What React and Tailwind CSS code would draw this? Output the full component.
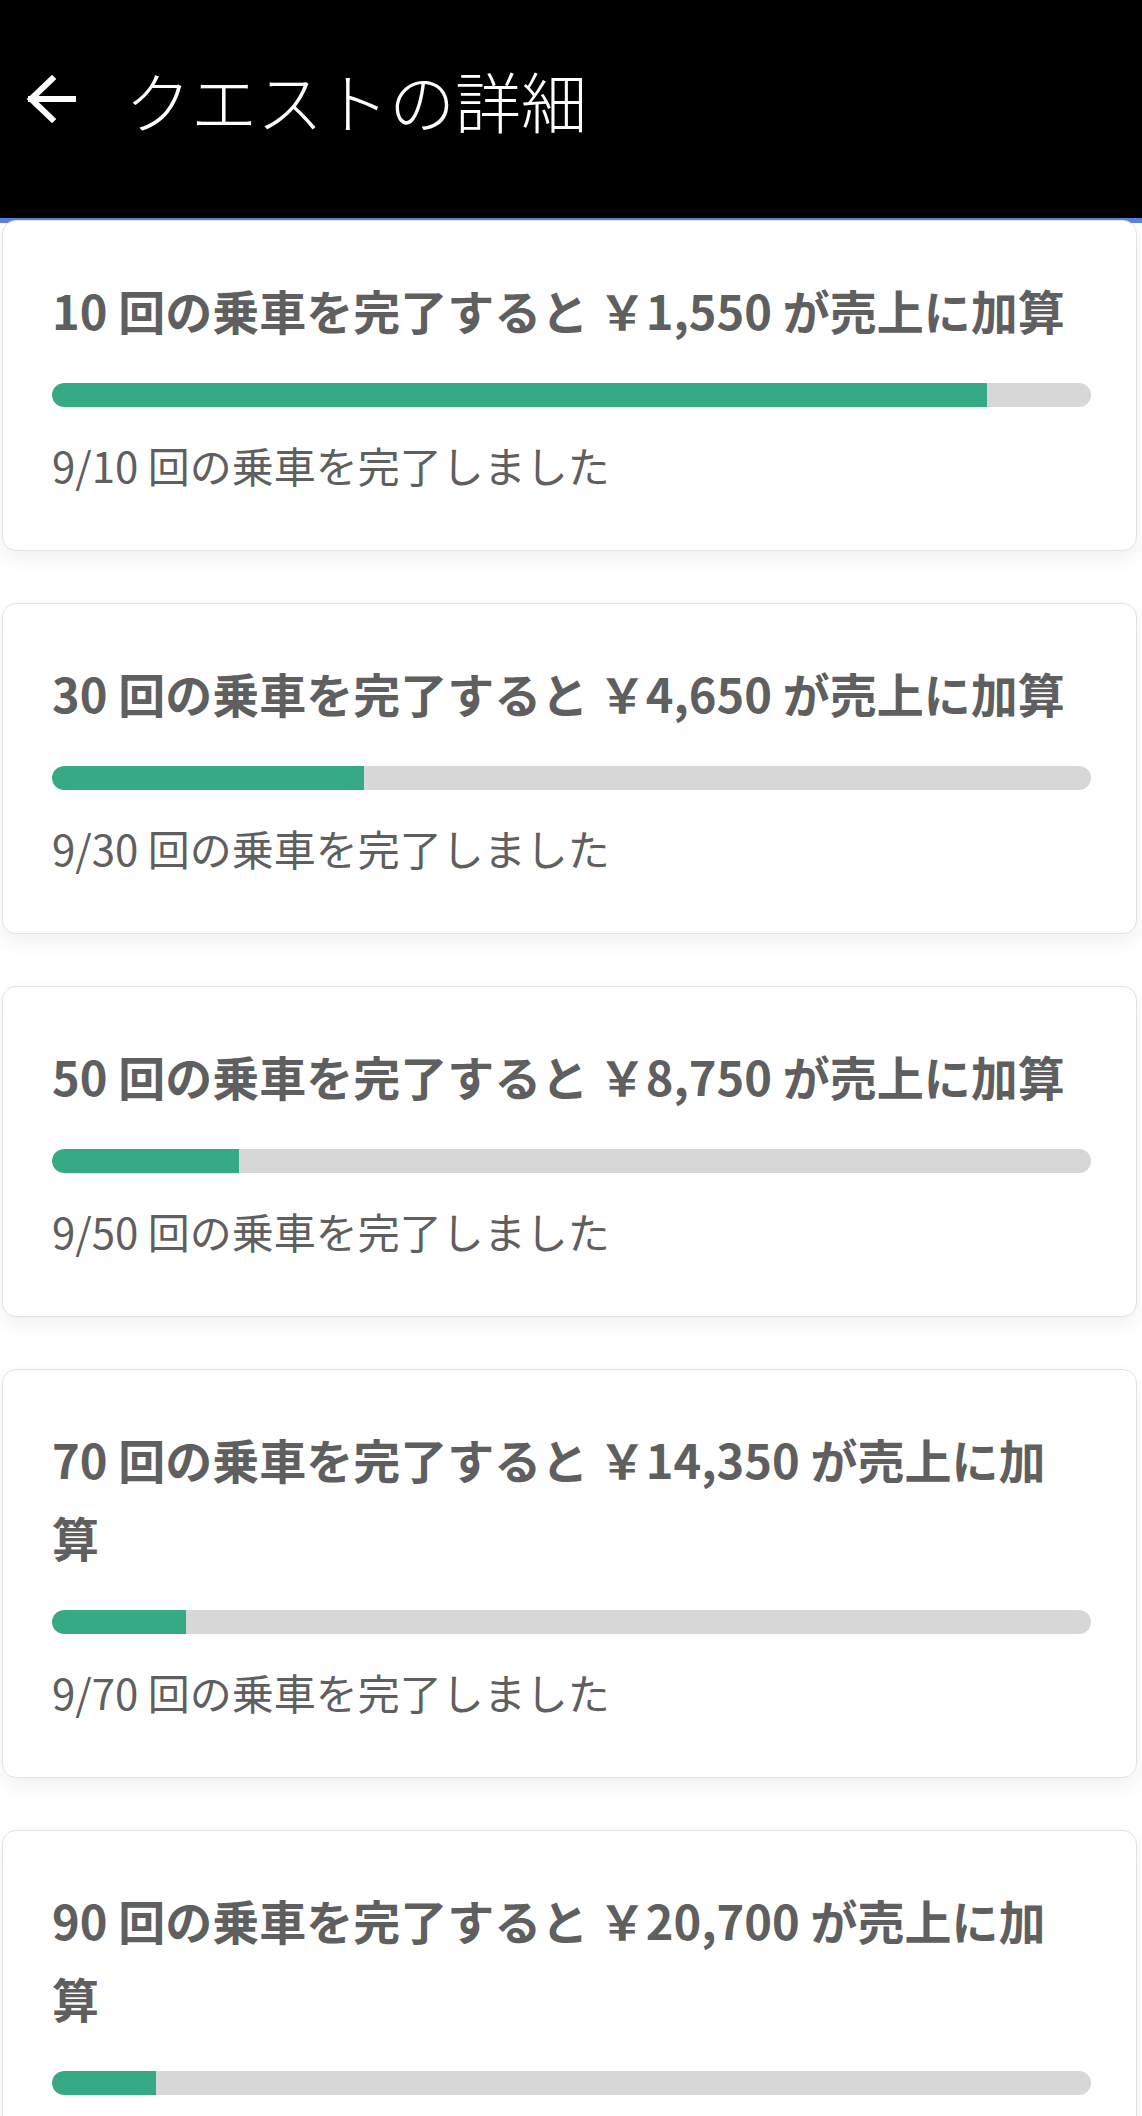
// App.jsx
const quests = [
  { rides: 10, reward: "1,550" },
  { rides: 30, reward: "4,650" },
  { rides: 50, reward: "8,750" },
  { rides: 70, reward: "14,350" },
  { rides: 90, reward: "20,700" },
];

const done = 9;

function BackArrow() {
  return (
    <svg width="52" height="48" viewBox="0 0 52 48" fill="none" stroke="white" strokeWidth="6" strokeLinecap="square">
      <path d="M6 24 H48" />
      <path d="M27 4 L6 24 L27 44" />
    </svg>
  );
}

function QuestCard({ rides, reward }) {
  const pct = Math.min(100, (done / rides) * 100);
  return (
    <div className="ml-[2px] mr-[5px] rounded-[14px] border border-[#e2e2e2] bg-white pt-[50px] pb-[56px] pl-[49px] pr-[45px] shadow-[0_8px_20px_rgba(0,0,0,0.06)]">
      <h2 className="pr-[14px] text-[47px] leading-[78px] font-bold text-[#5f5f5f]">
        {rides} 回の乗車を完了すると ￥{reward} が売上に加算
      </h2>
      <div className="mt-[34px] h-[24px] w-full overflow-hidden rounded-full bg-[#d7d7d7]">
        <div className="h-full rounded-l-full bg-[#36a985]" style={{ width: `${pct}%` }} />
      </div>
      <p className="mt-[29px] text-[42px] leading-[58px] text-[#5f5f5f]">
        {done}/{rides} 回の乗車を完了しました
      </p>
    </div>
  );
}

export default function App() {
  return (
    <div className="min-h-screen bg-white font-['Noto_Sans_CJK_JP','Noto_Sans',sans-serif]">
      <header className="h-[218px] bg-black flex items-center pl-[25px] pb-[20px]">
        <BackArrow />
        <h1 className="ml-[48px] text-[66px] font-light text-white leading-none">クエストの詳細</h1>
      </header>
      <div className="h-[5px] bg-[#5b7fe0]" />
      <main className="relative -mt-[3px] flex flex-col gap-[52px] pb-10">
        {quests.map((q) => (
          <QuestCard key={q.rides} {...q} />
        ))}
      </main>
    </div>
  );
}
